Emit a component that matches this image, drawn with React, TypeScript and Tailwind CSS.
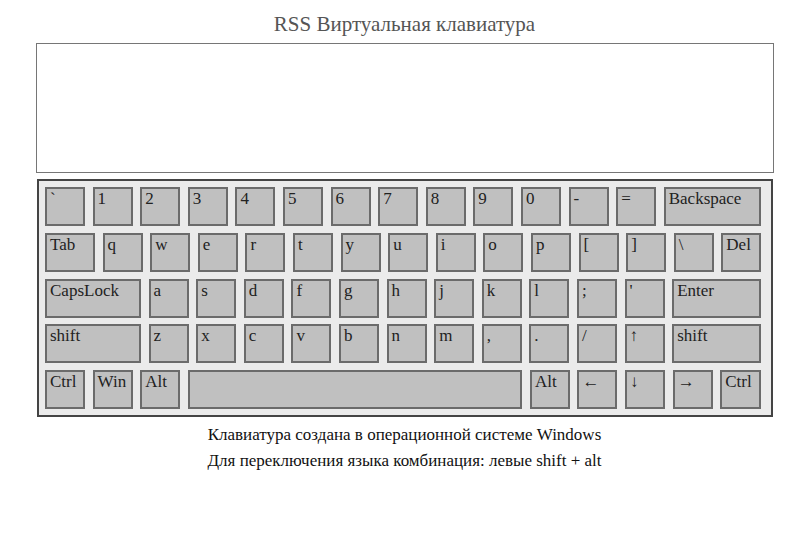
const rows: { label: string; w: number }[][] = [
  [
    { label: '`', w: 40 },
    ...'1234567890-='.split('').map((c) => ({ label: c, w: 40 })),
    { label: 'Backspace', w: 97.2 },
  ],
  [
    { label: 'Tab', w: 50 },
    ...'qwertyuiop[]\\'.split('').map((c) => ({ label: c, w: 40 })),
    { label: 'Del', w: 40 },
  ],
  [
    { label: 'CapsLock', w: 96 },
    ...'asdfghjkl;\''.split('').map((c) => ({ label: c, w: 40 })),
    { label: 'Enter', w: 88.8 },
  ],
  [
    { label: 'shift', w: 96 },
    ...'zxcvbnm,./↑'.split('').map((c) => ({ label: c, w: 40 })),
    { label: 'shift', w: 88.8 },
  ],
  [
    { label: 'Ctrl', w: 40 },
    { label: 'Win', w: 40 },
    { label: 'Alt', w: 40 },
    { label: '', w: 334.5 },
    { label: 'Alt', w: 40 },
    { label: '←', w: 40 },
    { label: '↓', w: 40 },
    { label: '→', w: 40 },
    { label: 'Ctrl', w: 40.6 },
  ],
];

function Key({ label, w }: { label: string; w: number }) {
  return (
    <div
      className="h-[39px] shrink-0 border-2 border-[#6b6b6b] bg-[#c0c0c0] pl-[3px] text-[17px] leading-[20px] text-[#222]"
      style={{ width: w }}
    >
      {label}
    </div>
  );
}

export default function App() {
  return (
    <div className="flex min-h-[555px] w-[809px] flex-col items-center bg-white font-[Liberation_Serif,Times_New_Roman,serif]">
      <h1 className="mt-[12px] text-[21px] leading-[24px] text-[#555]">RSS Виртуальная клавиатура</h1>
      <textarea className="mt-[7px] h-[130px] w-[738px] resize-none border border-[#767676] outline-none" />
      <div className="mt-[6px] flex w-[736px] flex-col gap-[6.75px] border-2 border-[#444] bg-[#ebebeb] py-[6px] pl-[6.5px] pr-[7px]">
        {rows.map((row, i) => (
          <div key={i} className="flex gap-[7.6px]">
            {row.map((k, j) => (
              <Key key={j} label={k.label} w={k.w} />
            ))}
          </div>
        ))}
      </div>
      <p className="mt-[5px] text-[17px] leading-[26px] text-[#111]">Клавиатура создана в операционной системе Windows</p>
      <p className="text-[17px] leading-[26px] text-[#111]">Для переключения языка комбинация: левые shift + alt</p>
    </div>
  );
}
